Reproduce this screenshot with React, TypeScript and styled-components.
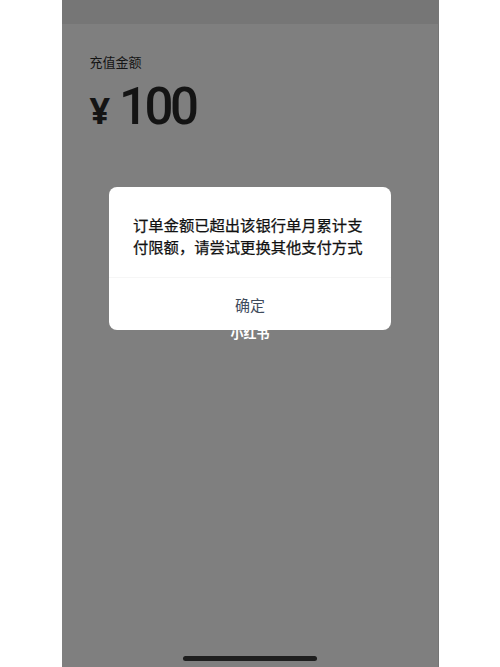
import React from "react";
import styled, { createGlobalStyle } from "styled-components";

const colors = {
  page: "#ffffff",
  screen: "#7f7f7f",
  statusBar: "#767676",
  ink: "#141414",
  dialog: "#ffffff",
  message: "#111111",
  action: "#3f4b5c",
  divider: "#f6f6f6",
};

const GlobalStyle = createGlobalStyle`
  html, body {
    margin: 0;
    padding: 0;
    background: ${colors.page};
  }
  body {
    font-family: "Noto Sans CJK SC", "Noto Sans", sans-serif;
  }
`;

export default function App() {
  return (
    <>
      <GlobalStyle />
      <Page>
        <Screen>
          <StatusBar />
          <Content>
            <Label>充值金额</Label>
            <AmountRow>
              <Currency>¥</Currency>
              <Amount>100</Amount>
            </AmountRow>
          </Content>
          <HomeIndicator />

          <Overlay>
            <Watermark>小红书</Watermark>
            <Dialog>
              <Message>订单金额已超出该银行单月累计支付限额，请尝试更换其他支付方式</Message>
              <Divider />
              <ActionButton>确定</ActionButton>
            </Dialog>
          </Overlay>
        </Screen>
      </Page>
    </>
  );
}

const Page = styled.div`
  width: 500px;
  height: 667px;
  display: flex;
  justify-content: center;
  background: ${colors.page};
`;

const Screen = styled.div`
  position: relative;
  width: 377px;
  height: 667px;
  display: flex;
  flex-direction: column;
  background: ${colors.screen};
  box-shadow: inset -1px 0 0 rgba(0, 0, 0, 0.08);
  overflow: hidden;
`;

const StatusBar = styled.div`
  height: 24px;
  flex-shrink: 0;
  background: ${colors.statusBar};
`;

const Content = styled.div`
  flex: 1;
  display: flex;
  flex-direction: column;
  padding: 29px 28px 0;
`;

const Label = styled.div`
  font-size: 13px;
  line-height: 18px;
  color: ${colors.ink};
`;

const AmountRow = styled.div`
  display: flex;
  align-items: baseline;
  gap: 9px;
  margin-top: 10px;
  color: ${colors.ink};
`;

const Currency = styled.span`
  font-family: "Noto Sans", sans-serif;
  font-size: 36px;
  font-weight: 700;
  line-height: 1;
`;

const Amount = styled.span`
  font-family: Roboto, "Liberation Sans", sans-serif;
  font-size: 51px;
  font-weight: 500;
  letter-spacing: -3.5px;
  line-height: 1;
`;

const HomeIndicator = styled.div`
  align-self: center;
  width: 134px;
  height: 5px;
  margin-bottom: 6px;
  border-radius: 3px;
  background: #1e1e1e;
`;

const Overlay = styled.div`
  position: absolute;
  inset: 0;
  display: flex;
  flex-direction: column;
  align-items: center;
  padding-top: 187px;
`;

const Dialog = styled.div`
  position: relative;
  width: 282px;
  display: flex;
  flex-direction: column;
  background: ${colors.dialog};
  border-radius: 8px;
  overflow: hidden;
`;

const Message = styled.p`
  margin: 0;
  padding: 26px 24px 20px;
  font-size: 15.3px;
  font-weight: 400;
  line-height: 22px;
  color: ${colors.message};
  -webkit-text-stroke: 0.25px ${colors.message};
`;

const Divider = styled.div`
  height: 1px;
  background: ${colors.divider};
`;

const ActionButton = styled.button`
  height: 52px;
  border: none;
  background: transparent;
  font-family: "Noto Sans CJK SC", sans-serif;
  font-size: 15px;
  color: ${colors.action};
  padding: 0;
  cursor: pointer;
`;

const Watermark = styled.div`
  position: absolute;
  top: 325px;
  left: 0;
  right: 0;
  text-align: center;
  font-size: 13px;
  font-weight: 700;
  line-height: 16px;
  color: #ffffff;
`;
